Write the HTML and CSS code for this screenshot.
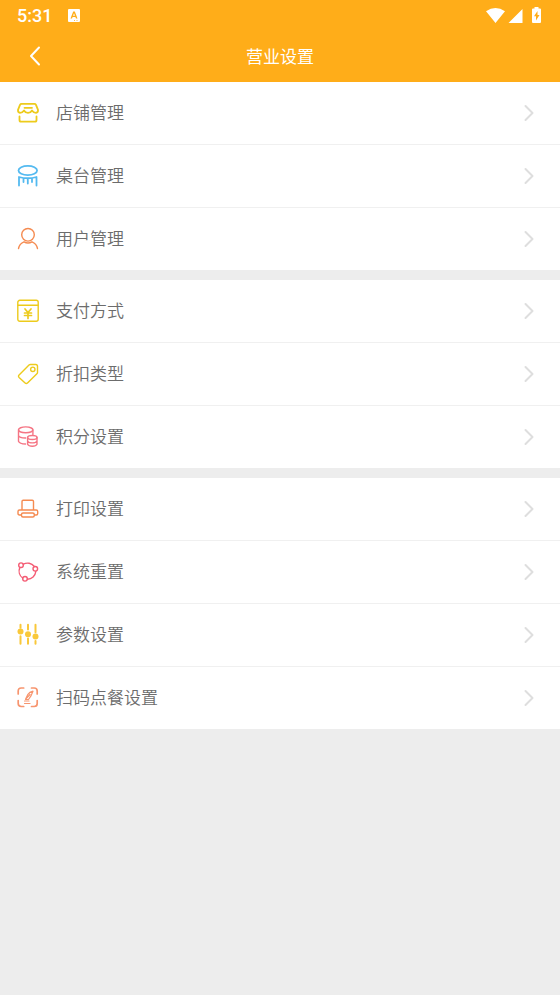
FILE: index.html
```
<!DOCTYPE html>
<html lang="zh-CN">
<head>
<meta charset="utf-8">
<meta name="viewport" content="width=device-width, initial-scale=1">
<title>营业设置</title>
<link rel="stylesheet" href="styles.css">
</head>
<body>
<svg class="defs" aria-hidden="true">
  <symbol id="chevron" viewBox="0 0 10 18"><path d="M1.500 2 8.500 9l-7 7"/></symbol>
</svg>
<header class="header">
  <div class="status">
    <span class="time">5:31</span>
    <svg class="notice" viewBox="0 0 12 13" aria-hidden="true"><path fill="#fff" fill-rule="evenodd" d="M1 0h10q1 0 1 1v11q0 1-1 1H1q-1 0-1-1V1q0-1 1-1zM5.200 2.500 2.500 9.500H4l.6-1.500h2.800l.6 1.500h1.500L6.800 2.500zM6 4.300l1 2.500H5zM6 11v.8h1V11zm2.500 0v.8h1V11z"/></svg>
    <svg class="signals" viewBox="0 0 56 17" aria-hidden="true">
      <path fill="#fff" d="M0 4.200Q9.500-2.200 19 4.200L9.500 16zM36.500 2v14H22.500zM48.500 1.500V0h4v1.500H54q1 0 1 1V15q0 1-1 1h-7q-1 0-1-1V2.500q0-1 1-1z"/>
      <path fill="#ffad19" d="M51.500 4 48 9.300h2V13.500l3.500-5.500h-2z"/>
    </svg>
  </div>
  <div class="bar">
    <button class="back" type="button" aria-label="返回"><svg viewBox="0 0 12 20" aria-hidden="true"><path d="M10 1.500 2 10l8 8.500"/></svg></button>
    <h1 class="title">营业设置</h1>
  </div>
</header>
<main class="groups">
  <nav class="group">
    <a class="row" href="#shop">
      <svg class="icon yellow thick" viewBox="0 0 22 22" aria-hidden="true"><path d="M4.500 1.800h13q1 0 1.500 1l2 5q.3 2.500-2 3-2.500 0-4-2.300-1.300 2.300-4 2.300T7 8.500q-1.500 2.300-4 2.300-2.300-.5-2-3l2-5q.5-1 1.500-1zM7.500 5.800h7.500M2.500 14.500v3.500q0 1.700 1.500 1.700h14q1.500 0 1.500-1.700v-3.500"/></svg>
      <span class="label">店铺管理</span><svg class="chevron" aria-hidden="true"><use href="#chevron"/></svg>
    </a>
    <a class="row" href="#tables">
      <svg class="icon blue thick" viewBox="0 0 22 22" aria-hidden="true"><ellipse cx="10.800" cy="5.500" rx="9.300" ry="4.600"/><path d="M2 20.500v-8.500q8.800 2.500 17.500 0v8.500M6.500 13.500v3.500M10.800 14v4.500M15 13.500v3.500"/></svg>
      <span class="label">桌台管理</span><svg class="chevron" aria-hidden="true"><use href="#chevron"/></svg>
    </a>
    <a class="row" href="#users">
      <svg class="icon orange" viewBox="0 0 22 22" aria-hidden="true"><circle cx="11" cy="6.800" r="6.300"/><path d="M1.500 20.500Q2.500 15.500 7 13.800q4 2.400 8 0 4.500 1.700 5.500 6.700"/></svg>
      <span class="label">用户管理</span><svg class="chevron" aria-hidden="true"><use href="#chevron"/></svg>
    </a>
  </nav>
  <nav class="group">
    <a class="row" href="#payment">
      <svg class="icon yellow" viewBox="0 0 22 22" aria-hidden="true"><rect x=".8" y=".3" width="20.400" height="21" rx="2"/><path d="M1 5.200h20"/><path class="bold" d="m8 9 3 3.500L14 9M7.500 13h7M7.500 15.500h7M11 12.500V18.500"/></svg>
      <span class="label">支付方式</span><svg class="chevron" aria-hidden="true"><use href="#chevron"/></svg>
    </a>
    <a class="row" href="#discount">
      <svg class="icon yellow" viewBox="0 0 22 22" aria-hidden="true"><path d="M13.500 1.500h5.200q1.800 0 1.800 1.800v6.200q0 .7-.6 1.300L10.500 20q-1.200 1.200-2.400 0l-6-5.600q-1.200-1.200 0-2.400L12 2.100q.6-.6 1.500-.6z"/><circle cx="15.800" cy="6.300" r="2.200"/></svg>
      <span class="label">折扣类型</span><svg class="chevron" aria-hidden="true"><use href="#chevron"/></svg>
    </a>
    <a class="row" href="#points">
      <svg class="icon pink" viewBox="0 0 22 22" aria-hidden="true"><ellipse cx="8.700" cy="3.800" rx="7.200" ry="2.900"/><path d="M1.500 4v11.200q1 2.600 7 2.800M15.900 4v4.500M1.500 9.500q1 2.600 7.200 2.500"/><ellipse cx="15.300" cy="11.500" rx="4.700" ry="2"/><path d="M10.600 11.500v6.800q1 2 4.700 2t4.700-2v-6.800M10.600 15q1 1.900 4.700 1.900T20 15"/></svg>
      <span class="label">积分设置</span><svg class="chevron" aria-hidden="true"><use href="#chevron"/></svg>
    </a>
  </nav>
  <nav class="group">
    <a class="row" href="#printing">
      <svg class="icon orange" viewBox="0 0 22 22" aria-hidden="true"><path d="M5 12V3.500Q5 2.300 6.200 2.300h9.100q1.200 0 1.200 1.200V12M4.200 17H2.500q-1.500 0-1.500-1.500v-2Q1 12 2.500 12h16.700q1.500 0 1.500 1.500v2q0 1.500-1.500 1.500h-1.700"/><rect x="4.500" y="15" width="12.800" height="4" rx="1.500"/></svg>
      <span class="label">打印设置</span><svg class="chevron" aria-hidden="true"><use href="#chevron"/></svg>
    </a>
    <a class="row" href="#reset">
      <svg class="icon red" viewBox="0 0 22 22" aria-hidden="true"><path d="M6.400 3.200A8.600 8.600 0 0 1 17.200 5.300M18.800 10.500A8.600 8.600 0 0 1 10.500 18.200M5.700 17A8.600 8.600 0 0 1 2.800 6.600"/><circle cx="4" cy="4.200" r="2.300"/><circle cx="18.300" cy="7.800" r="2.300"/><circle cx="8" cy="17.800" r="2.300"/></svg>
      <span class="label">系统重置</span><svg class="chevron" aria-hidden="true"><use href="#chevron"/></svg>
    </a>
    <a class="row" href="#parameters">
      <svg class="icon amber" viewBox="0 0 22 22" aria-hidden="true"><path d="M3.500.8v3M3.500 12.200v7.500M11 .8v4.700M11 14.500v5.200M18.500.8v7.500M18.500 17v2.700"/><circle cx="3.500" cy="7.500" r="3"/><circle cx="11" cy="10.200" r="3"/><circle cx="18.500" cy="12.500" r="3"/></svg>
      <span class="label">参数设置</span><svg class="chevron" aria-hidden="true"><use href="#chevron"/></svg>
    </a>
    <a class="row" href="#scan-order">
      <svg class="icon coral" viewBox="0 0 22 22" aria-hidden="true"><path class="corners" d="M1.200 7V4q0-3 3-3h2.500M14.500 1h2.700q3 0 3 3v3M20.200 13.500v3q0 3-3 3h-2.700M6.700 19.500H4.200q-3 0-3-3v-3"/><path d="M16 4.200q-3.500.8-5.300 3.500L8.500 12.300l3 .2 2.300-3.300zM13 7.500l-4.500 4.800M7.500 14h4.500M7.500 16.500h5.500"/></svg>
      <span class="label">扫码点餐设置</span><svg class="chevron" aria-hidden="true"><use href="#chevron"/></svg>
    </a>
  </nav>
</main>
</body>
</html>
```
FILE: styles.css
```
* {
  box-sizing: border-box;
}

body {
  margin: 0;
  min-height: 100vh;
  background: #ededed;
  font-family: "Noto Sans CJK SC", sans-serif;
  font-size: 17px;
  font-weight: 350;
  line-height: 24px;
}

svg {
  display: block;
  flex: none;
  fill: none;
  stroke-linecap: round;
  stroke-linejoin: round;
}

.defs {
  position: absolute;
  width: 0;
  height: 0;
}

.header {
  background: #ffad19;
  color: #fff;
}

.status {
  display: flex;
  align-items: center;
  height: 30px;
  padding: 0 18px 0 17px;
}

.time {
  font-family: Roboto, sans-serif;
  font-size: 18px;
  font-weight: 500;
  padding-top: 2px;
}

.notice {
  width: 12px;
  height: 13px;
  margin-left: 16px;
}

.signals {
  width: 56px;
  height: 17px;
  margin-left: auto;
}

.bar {
  display: grid;
  grid-template-columns: 56px 1fr 56px;
  align-items: center;
  height: 52px;
}

.back {
  display: flex;
  align-items: center;
  justify-content: center;
  height: 52px;
  padding: 0 0 0 13px;
  border: 0;
  background: none;
}

.back svg {
  width: 12px;
  height: 20px;
  stroke: #fff;
  stroke-width: 2;
}

.title {
  margin: 0;
  font-size: 17px;
  font-weight: 400;
  text-align: center;
}

.groups {
  display: grid;
  gap: 10px;
}

.group {
  background: #fff;
}

.row {
  display: flex;
  align-items: center;
  height: 62px;
  padding: 0 26px 0 17px;
  color: #6c6c6c;
  text-decoration: none;
}

.row + .row {
  height: 63px;
  border-top: 1px solid #f0f0f0;
}

.label {
  flex: 1;
  margin-left: 17px;
  padding-bottom: 2px;
}

.chevron {
  width: 10px;
  height: 18px;
  stroke: #dedede;
  stroke-width: 2;
}

.icon {
  width: 22px;
  height: 22px;
  overflow: visible;
  stroke: currentColor;
  stroke-width: 1.4;
}

.thick {
  stroke-width: 1.8;
}

.bold {
  stroke-width: 1.7;
}

.yellow {
  color: #edcb1c;
}

.blue {
  color: #54baf0;
}

.orange {
  color: #f58b51;
}

.pink {
  color: #f57584;
}

.red {
  color: #f45c74;
}

.amber {
  color: #f9c83a;
  stroke-width: 2;
}

.amber circle {
  fill: currentColor;
  stroke: none;
}

.coral {
  color: #f7956f;
  stroke-width: 1.2;
}

.corners {
  stroke-width: 1.7;
}
```
